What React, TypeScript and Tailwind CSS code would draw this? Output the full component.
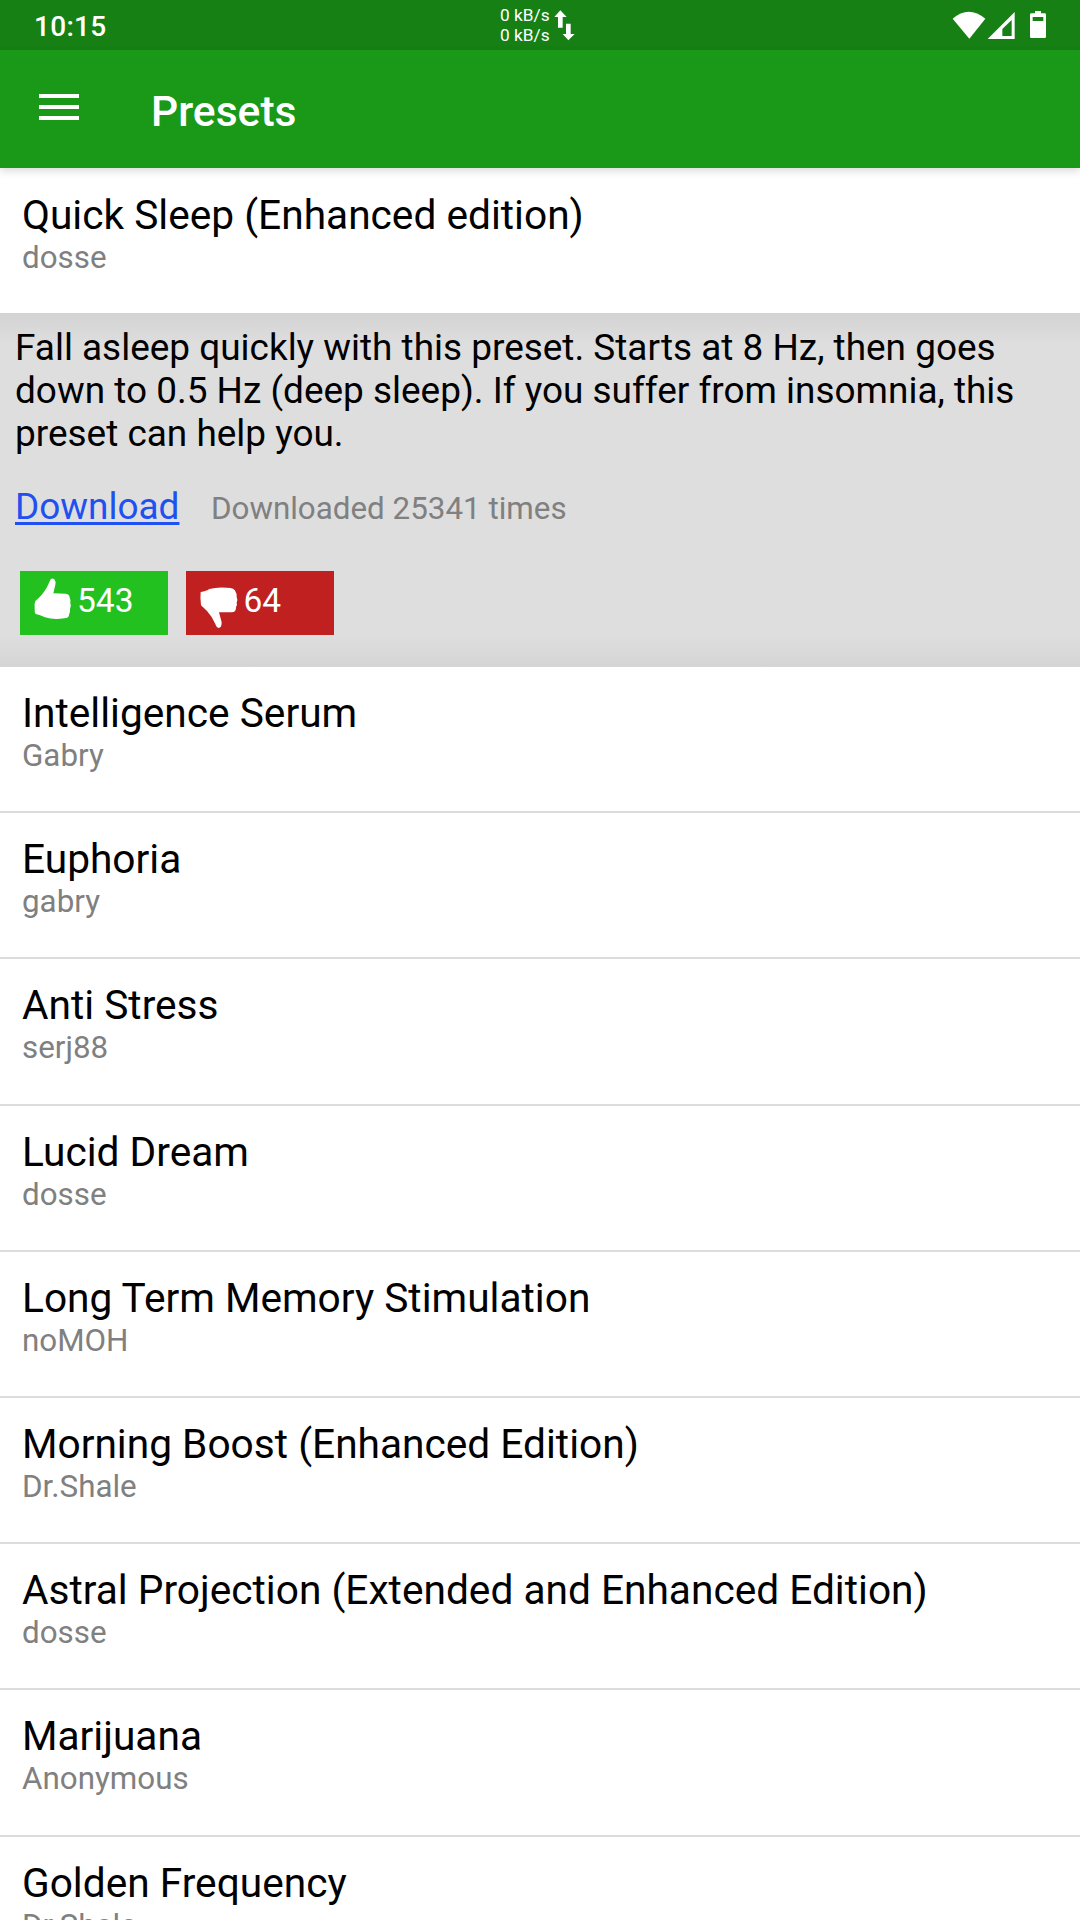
const presets = [
  { title: 'Intelligence Serum', author: 'Gabry' },
  { title: 'Euphoria', author: 'gabry' },
  { title: 'Anti Stress', author: 'serj88' },
  { title: 'Lucid Dream', author: 'dosse' },
  { title: 'Long Term Memory Stimulation', author: 'noMOH' },
  { title: 'Morning Boost (Enhanced Edition)', author: 'Dr.Shale' },
  { title: 'Astral Projection (Extended and Enhanced Edition)', author: 'dosse' },
  { title: 'Marijuana', author: 'Anonymous' },
  { title: 'Golden Frequency', author: 'Dr.Shale' },
];

function PresetLabel({ title, author }: { title: string; author: string }) {
  return (
    <>
      <div className="text-[40.65px] leading-[48px] whitespace-nowrap text-black">{title}</div>
      <div className="text-[31.35px] leading-[37px] whitespace-nowrap text-[#808080]">{author}</div>
    </>
  );
}

function StatusBar() {
  return (
    <div className="flex h-[50px] shrink-0 items-center justify-between bg-[#168014] pr-[32px] pl-[34px] text-white">
      <div className="w-[466px] pt-[2px] text-[28px] leading-[33px] font-medium tracking-[0.3px]">10:15</div>
      <div className="flex flex-1 items-center">
        <div className="text-[17.3px] leading-[20px]">
          <div>0 kB/s</div>
          <div>0 kB/s</div>
        </div>
        <svg className="ml-[4px] h-[31px] w-[22px]" viewBox="222 28 66 93" fill="#fff">
          <path d="M241 29l19 20h-12v32h-14V49h-11z" />
          <path d="M258 69h14v31h12l-19 19-17-19h10z" />
        </svg>
      </div>
      <svg className="h-[30px] w-[96px]" viewBox="66 30 288 90" fill="#fff">
        <path d="M68 56Q116 14 166 56L118 116z" />
        <path fillRule="evenodd" d="M254 36V117H173zM245 60L217 87V108H245z" />
        <path fillRule="evenodd" d="M315 33h18v7h11q4 0 4 4v66q0 4-4 4h-40q-4 0-4-4V44q0-4 4-4h11zM308 51v12h32V51z" />
      </svg>
    </div>
  );
}

function Header() {
  return (
    <header className="flex h-[118px] shrink-0 items-center bg-[#1a9918] pl-[39px] text-white shadow-[0_3px_8px_rgba(0,0,0,0.15)]">
      <div className="-mt-[4px] flex w-[40px] flex-col gap-[7px]">
        <div className="h-[4px] bg-white" />
        <div className="h-[4px] bg-white" />
        <div className="h-[4px] bg-white" />
      </div>
      <h1 className="ml-[72px] pt-[4px] text-[42.6px] leading-[50px] font-medium">Presets</h1>
    </header>
  );
}

function VoteButtons() {
  return (
    <div className="mt-[43px] flex gap-[18px] pl-[5px] text-[33.5px] leading-[40px] text-white">
      <button className="flex h-[64px] w-[148px] items-start bg-[#22c120] pl-[12px]">
        <svg className="h-[53px] w-[41px]" viewBox="96 63 123 159" fill="#fff">
          <path d="M152 88Q157 83 163 88Q168 94 166 104L160 130Q180 130 197 131Q209 133 209 143Q213 150 211 158Q214 166 210 176Q211 187 207 194Q208 203 193 205Q160 210 135 202Q120 195 107 192Q103 188 104 176Q102 162 106 153Q125 138 140 113Z" />
        </svg>
        <span className="ml-[4px] pt-[10px]">543</span>
      </button>
      <button className="flex h-[64px] w-[148px] items-start bg-[#c12020] pl-[12px]">
        <svg className="h-[60px] w-[41px]" viewBox="594 63 123 180" fill="#fff">
          <path d="M602 126Q620 123 628 117Q650 111 680 113Q705 113 707 126Q712 133 710 141Q714 149 710 158Q713 166 708 171Q709 187 695 187L657 187L665 217Q665 234 656 234Q649 233 646 222L635 201Q620 180 603 166Q600 145 602 126Z" />
        </svg>
        <span className="ml-[4.5px] pt-[10px]">64</span>
      </button>
    </div>
  );
}

export default function App() {
  return (
    <div className="flex h-[1920px] w-[1080px] flex-col overflow-hidden bg-white font-['Roboto',sans-serif]">
      <StatusBar />
      <Header />
      <section className="h-[145px] shrink-0 pt-[23px] pl-[22px]">
        <PresetLabel title="Quick Sleep (Enhanced edition)" author="dosse" />
      </section>
      <section className="h-[354px] shrink-0 bg-[#dedede] bg-[linear-gradient(to_bottom,#d3d3d3_0,#dedede_32px,#dedede_322px,#d5d5d5_100%)] pt-[13px] pl-[15px]">
        <p className="text-[36.95px] leading-[43px] whitespace-nowrap text-black">
          Fall asleep quickly with this preset. Starts at 8 Hz, then goes
          <br />
          down to 0.5 Hz (deep sleep). If you suffer from insomnia, this
          <br />
          preset can help you.
        </p>
        <div className="mt-[30px] flex h-[43px] items-baseline leading-[43px]">
          <a className="text-[36.95px] text-[#2050f0] underline decoration-[3px] underline-offset-[3px]">Download</a>
          <span className="ml-[31.5px] text-[31.35px] text-[#808080]">Downloaded 25341 times</span>
        </div>
        <VoteButtons />
      </section>
      <ul>
        {presets.map((p) => (
          <li key={p.title} className="h-[146.2px] border-b-2 border-[#dcdcdc] pt-[22px] pl-[22px]">
            <PresetLabel title={p.title} author={p.author} />
          </li>
        ))}
      </ul>
    </div>
  );
}
